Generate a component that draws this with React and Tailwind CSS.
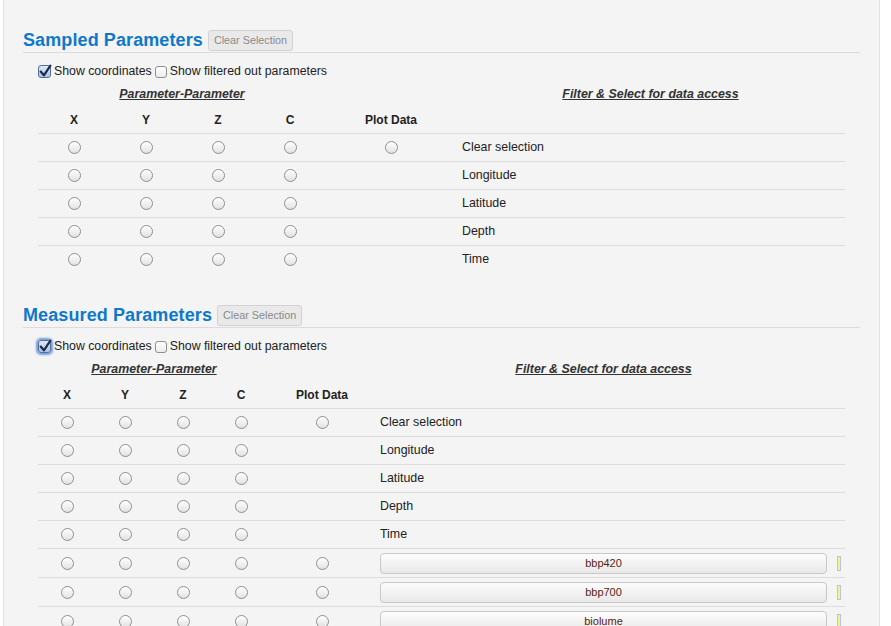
import React from "react";

const FONT = { fontFamily: '"Liberation Sans", Arial, Helvetica, sans-serif' };

function Radio() {
  return (
    <span className="inline-block w-[13px] h-[13px] rounded-full border border-[#8f8f8f] bg-gradient-to-b from-[#ffffff] to-[#e2e2e2] shadow-[inset_0_1px_1px_rgba(255,255,255,0.9)] align-middle" />
  );
}

function CheckBox({ checked, focus }) {
  if (!checked) {
    return (
      <span className="inline-block w-[12px] h-[12px] rounded-[3px] border border-[#8e8e8e] bg-gradient-to-b from-[#ffffff] to-[#ececec] align-middle" />
    );
  }
  return (
    <span
      className={
        "relative inline-block w-[13px] h-[13px] rounded-[3px] border border-[#4f6f9c] bg-gradient-to-b from-[#dfe9f7] to-[#a9c2e6] align-middle " +
        (focus ? "shadow-[0_0_2px_2px_rgba(78,128,210,0.75)]" : "")
      }
    >
      <svg viewBox="0 0 13 13" className="absolute left-[-1px] top-[-2px] w-[14px] h-[14px]">
        <path d="M2.5 7 L5.5 10.5 L11.5 1.5" fill="none" stroke="#1b2a4a" strokeWidth="2" strokeLinecap="round" strokeLinejoin="round" />
      </svg>
    </span>
  );
}

function ParamButton({ label }) {
  return (
    <div className="h-[21px] w-full rounded-[4px] border border-[#c8c8c8] bg-gradient-to-b from-[#fdfdfd] to-[#e8e8e8] flex items-center justify-center text-[11px] text-[#5a1d10]">
      {label}
    </div>
  );
}

function Section({ title, cols, plotW, plotRadioRows, buttons, extraCol, mt }) {
  const coords = ["X", "Y", "Z", "C"];
  const textRows = ["Clear selection", "Longitude", "Latitude", "Depth", "Time"];
  const colW = cols;
  const paramW = colW * 4;
  return (
    <div className={mt}>
      <div className="h-[25px] flex items-center gap-[5px] border-b border-[#dcdcdc]">
        <h2 className="text-[18px] font-bold text-[#0f78c8] leading-none" style={{ letterSpacing: "0.1px" }}>
          {title}
        </h2>
        <button className="h-[21px] px-[5px] rounded-[3px] border border-[#d2d2d2] bg-[#e9e9e9] text-[10.8px] text-[#8a8a8a] leading-none">
          Clear Selection
        </button>
      </div>
      <div className="h-[28px] pl-[15px] pt-[8px] flex items-start">
        <div className="h-[20px] flex items-center text-[12.3px] text-[#222]">
          <CheckBox checked focus={buttons.length > 0} />
          <span className="ml-[3px]">Show coordinates</span>
          <span className="ml-[3px]">
            <CheckBox />
          </span>
          <span className="ml-[3px]">Show filtered out parameters</span>
        </div>
      </div>
      <div className="mx-[15px]">
        <div className="h-[26px] flex items-center text-[12.4px] font-bold italic underline text-[#333]">
          <div className="text-center" style={{ width: paramW }}>Parameter-Parameter</div>
          <div className="flex-1 text-center" style={{ paddingLeft: plotW, paddingRight: extraCol ? 12 : 0 }}>
            Filter &amp; Select for data access
          </div>
        </div>
        <div className="h-[26px] flex items-center text-[12px] font-bold text-[#222]">
          {coords.map((c) => (
            <div key={c} className="text-center" style={{ width: colW }}>
              {c}
            </div>
          ))}
          <div className="text-center" style={{ width: plotW }}>Plot Data</div>
        </div>
        {textRows.map((t, i) => (
          <div key={t} className="h-[28px] border-t border-[#dddddd] flex items-center text-[12.4px] text-[#222]">
            {coords.map((c) => (
              <div key={c} className="flex justify-center" style={{ width: colW }}>
                <Radio />
              </div>
            ))}
            <div className="flex justify-center" style={{ width: plotW }}>
              {i === 0 && plotRadioRows ? <Radio /> : null}
            </div>
            <div className="flex-1 pl-[6px]">{t}</div>
          </div>
        ))}
        {buttons.map((b) => (
          <div key={b} className="h-[29px] border-t border-[#dddddd] flex items-center">
            {coords.map((c) => (
              <div key={c} className="flex justify-center" style={{ width: colW }}>
                <Radio />
              </div>
            ))}
            <div className="flex justify-center" style={{ width: plotW }}>
              <Radio />
            </div>
            <div className="flex-1 px-[6px]">
              <ParamButton label={b} />
            </div>
            <div className="w-[12px] flex items-center justify-start pl-[4px]">
              <span className="block w-[4px] h-[15px] bg-[#fbee8c] border border-[#b5c6dd]" />
            </div>
          </div>
        ))}
      </div>
    </div>
  );
}

export default function App() {
  return (
    <div className="w-[891px] h-[626px] bg-white overflow-hidden" style={FONT}>
      <div className="ml-[3px] w-[877px] h-full bg-[#f4f4f4] border-l border-r border-[#e2e2e2] pl-[19px] pr-[19px] pt-[28px]">
        <Section
          title="Sampled Parameters"
          cols={72}
          plotW={130}
          plotRadioRows
          buttons={[]}
          extraCol={false}
          mt=""
        />
        <Section
          title="Measured Parameters"
          cols={58}
          plotW={104}
          plotRadioRows
          buttons={["bbp420", "bbp700", "biolume"]}
          extraCol
          mt="mt-[30px]"
        />
      </div>
    </div>
  );
}
